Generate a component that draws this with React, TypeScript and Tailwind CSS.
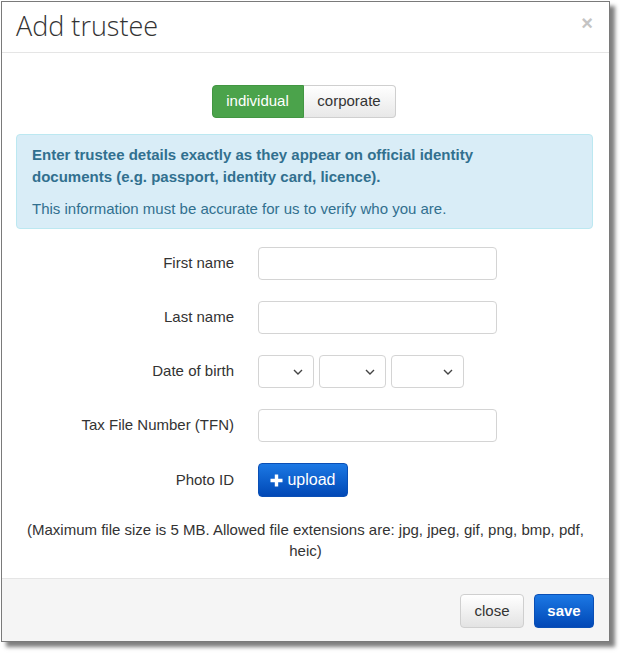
import React from 'react'

function Chevron() {
  return (
    <svg width="10" height="6" viewBox="0 0 10 6" className="text-[#444]">
      <path d="M1 1l4 4 4-4" fill="none" stroke="currentColor" strokeWidth="1.4" />
    </svg>
  )
}

function Select({ w }: { w: string }) {
  return (
    <div className={`${w} h-[33px] rounded-[4px] border border-[#d4d4d4] bg-white flex items-center justify-end pr-[10px]`}>
      <Chevron />
    </div>
  )
}

function Row({ label, children }: { label: string; children: React.ReactNode }) {
  return (
    <div className="flex items-center">
      <div className="w-[232px] text-right text-[15px] text-[#333]">{label}</div>
      <div className="ml-[24px] flex gap-[5px]">{children}</div>
    </div>
  )
}

const input = 'w-[239px] h-[33px] rounded-[4px] border border-[#d4d4d4] bg-white'

export default function App() {
  return (
    <div className="w-[620px] h-[653px] bg-white pl-px pt-px" style={{ fontFamily: '"Liberation Sans", Arial, sans-serif' }}>
      <div className="w-[609px] h-[641px] border border-[#7a7a7a] bg-white flex flex-col shadow-[5px_5px_4px_rgba(0,0,0,0.5)]">
        {/* Header */}
        <div className="h-[51px] border-b border-[#e5e5e5] flex items-center justify-between pl-[14px] pr-[16px]">
          <h1 className="text-[27px] font-light text-[#333] leading-none -mt-[3px]" style={{ fontFamily: '"Open Sans", sans-serif' }}>
            Add trustee
          </h1>
          <span className="text-[20px] font-bold text-[#c4c4c4] leading-none -mt-[9px]">×</span>
        </div>

        {/* Body */}
        <div className="flex flex-col pl-[14px] pr-[16px] pt-[32px]">
          <div className="flex justify-center pr-[2px]">
            <div className="flex h-[33px] text-[15px]">
              <div className="w-[92px] flex items-center justify-center rounded-l-[4px] bg-[#4ba34b] border border-[#429642] text-white">individual</div>
              <div className="w-[92px] flex items-center justify-center rounded-r-[4px] border border-l-0 border-[#cfcfcf] bg-gradient-to-b from-white to-[#e8e8e8] text-[#333]">corporate</div>
            </div>
          </div>

          <div className="mt-[16px] rounded-[4px] border border-[#bce8f1] bg-[#d9edf7] text-[#31708f] text-[15px] leading-[22px] px-[15px] pt-[9px] pb-[8px]">
            <p className="font-bold max-w-[500px]">Enter trustee details exactly as they appear on official identity documents (e.g. passport, identity card, licence).</p>
            <p className="mt-[10px]">This information must be accurate for us to verify who you are.</p>
          </div>
        </div>

        <div className="flex flex-col gap-[21px] mt-[18px]">
          <Row label="First name"><div className={input} /></Row>
          <Row label="Last name"><div className={input} /></Row>
          <Row label="Date of birth">
            <Select w="w-[56px]" />
            <Select w="w-[67px]" />
            <Select w="w-[73px]" />
          </Row>
          <Row label="Tax File Number (TFN)"><div className={input} /></Row>
          <Row label="Photo ID">
            <div className="h-[34px] w-[90px] rounded-[4px] bg-gradient-to-b from-[#1c78e4] to-[#0348b6] border border-[#0a4fb5] flex items-center justify-center gap-[4px] text-white text-[16px]">
              <svg width="13" height="13" viewBox="0 0 13 13">
                <path d="M6.5 0.5v12M0.5 6.5h12" stroke="currentColor" strokeWidth="3.4" />
              </svg>
              <span>upload</span>
            </div>
          </Row>
        </div>

        <p className="mt-[22px] px-[18px] text-center text-[15px] leading-[21px] text-[#333]">
          (Maximum file size is 5 MB. Allowed file extensions are: jpg, jpeg, gif, png, bmp, pdf, heic)
        </p>

        {/* Footer */}
        <div className="mt-auto h-[63px] border-t border-[#e5e5e5] bg-[#f5f5f5] flex items-center justify-end gap-[10px] pr-[15px] pt-[2px]">
          <div className="h-[34px] w-[64px] rounded-[4px] border border-[#cfcfcf] bg-gradient-to-b from-white to-[#e3e3e3] flex items-center justify-center text-[15px] text-[#333]">close</div>
          <div className="h-[34px] w-[60px] rounded-[4px] border border-[#0a4fb5] bg-gradient-to-b from-[#1c78e4] to-[#0348b6] flex items-center justify-center text-[15px] font-bold text-white">save</div>
        </div>
      </div>
    </div>
  )
}
